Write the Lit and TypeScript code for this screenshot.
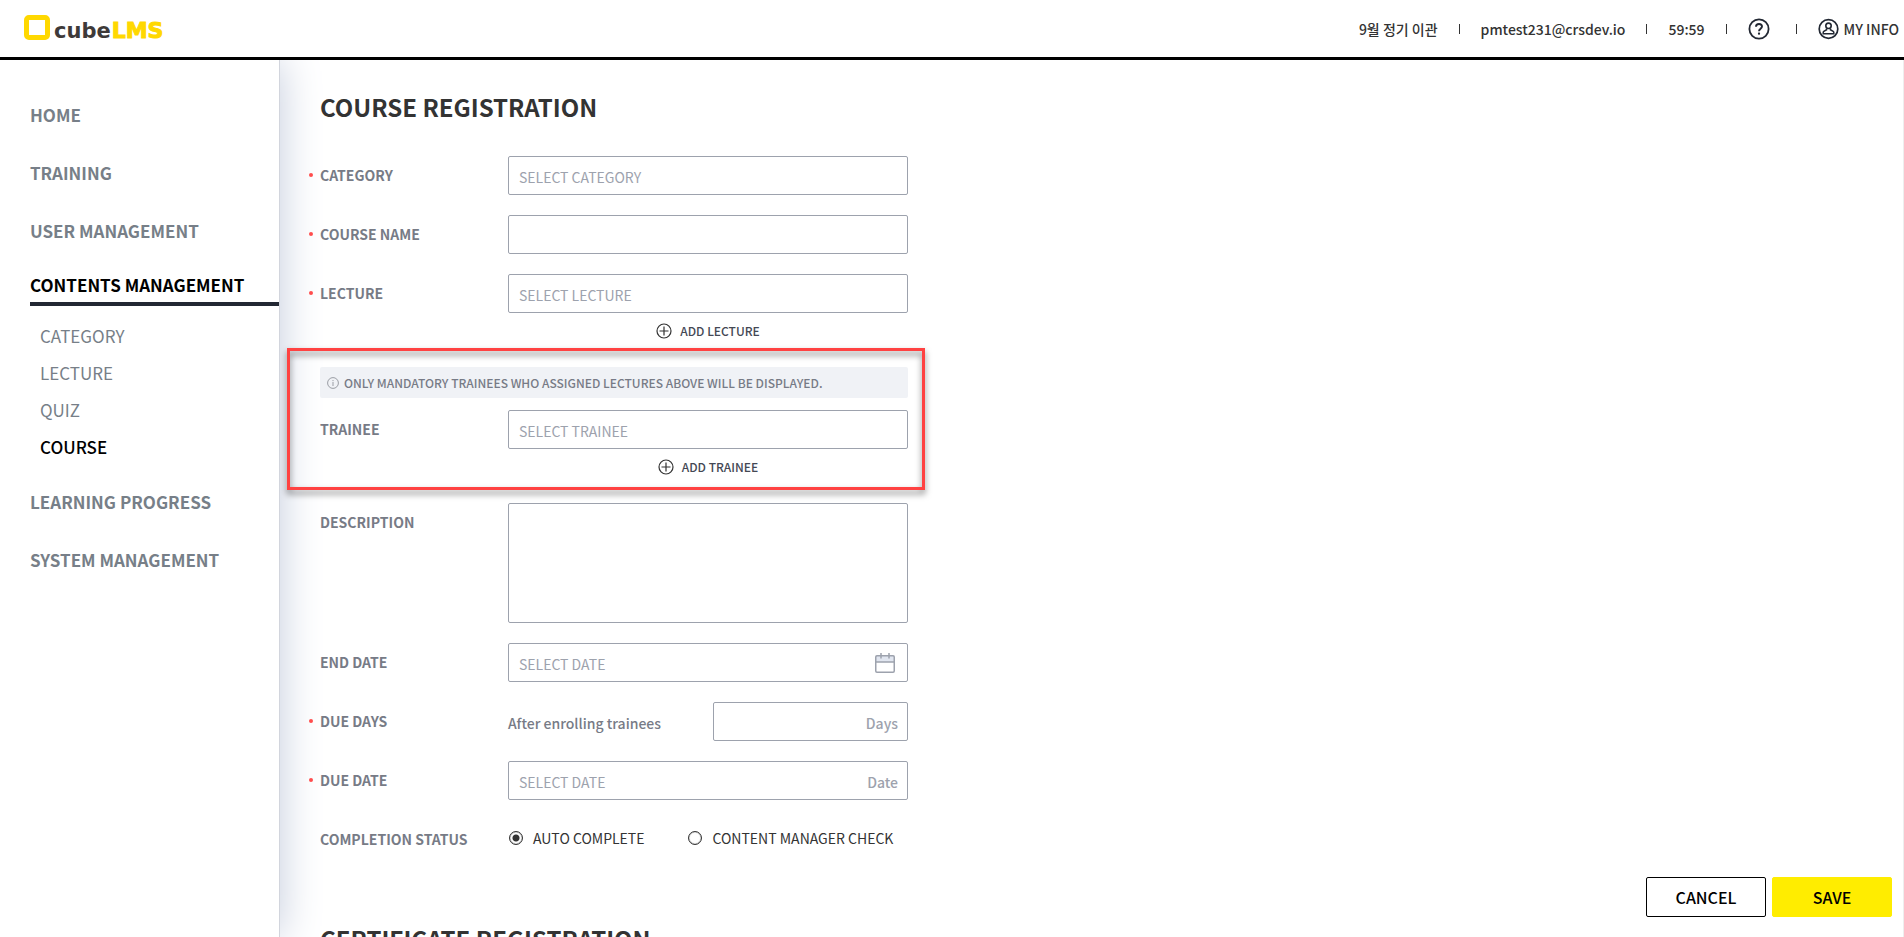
import { LitElement, html, css, nothing } from "lit";
import { customElement, state } from "lit/decorators.js";
import { classMap } from "lit/directives/class-map.js";

const plusIcon = html`<svg class="plus" viewBox="0 0 16 16" width="16" height="16" aria-hidden="true">
  <circle cx="8" cy="8" r="7" fill="none" stroke="#333" stroke-width="1.2" />
  <path d="M8 3.5v9M3.5 8h9" stroke="#333" stroke-width="1.2" fill="none" />
</svg>`;

const calendarIcon = html`<svg viewBox="0 0 20 20" width="20" height="20" aria-hidden="true">
  <path d="M1 3.5q0-1 1-1h16q1 0 1 1V9H1z" fill="#e1e6f0" />
  <rect x="0.75" y="2.75" width="18.5" height="16.5" rx="1.2" fill="none" stroke="#9da2ad" stroke-width="1.5" />
  <path d="M1 9h18M6 0v5.6M14 0v5.6" fill="none" stroke="#9da2ad" stroke-width="1.5" />
</svg>`;

const sharedType = css`
  * { box-sizing: border-box; }
  :host { font-family: "Noto Sans CJK KR", "Noto Sans", sans-serif; }
  button { font-family: inherit; cursor: pointer; }
  a { color: inherit; text-decoration: none; }
`;

@customElement("lms-header")
class LmsHeader extends LitElement {
  static styles = [sharedType, css`
    :host { display: block; flex: none; }
    header {
      display: flex; align-items: center; justify-content: space-between;
      height: 60px; padding: 0 5px 2px 24px;
      border-bottom: 3px solid #000; background: #fff;
    }
    .logo { display: flex; align-items: flex-end; gap: 4px; height: 25px; }
    .logo svg { display: block; }
    .word { display: flex; align-items: baseline; gap: 1px; font: 700 21px/18px "DejaVu Sans", sans-serif; color: #3e3a39; }
    .word b { font-size: 22px; color: #ffd800; -webkit-text-stroke: 1px #ffd800; }
    .tools { display: flex; align-items: center; font-size: 14px; line-height: 20px; font-weight: 500; color: #333; padding-top: 3px; }
    .tools > span, .tools > a, .tools > button { display: flex; align-items: center; gap: 5px; }
    .tools > button { border: 0; padding: 0; background: none; }
    .tools > * + * { margin-left: 21px; position: relative; }
    .tools > span + *, .tools > button + * { padding-left: 22px; }
    .tools > button + * { margin-left: 26px; }
    .tools > * + *::before {
      content: ""; position: absolute; left: 0; top: 50%;
      height: 10px; border-left: 1px solid #333; margin-top: -5px;
    }
  `];
  render() {
    return html`<header>
      <a class="logo" href="#" aria-label="cubeLMS">
        <svg width="26" height="25" viewBox="0 0 26 25" aria-hidden="true">
          <rect x="2.5" y="2.5" width="21" height="20" rx="2.4" fill="none" stroke="#ffd800" stroke-width="5" />
        </svg>
        <span class="word">cube<b>LMS</b></span>
      </a>
      <div class="tools">
        <span>9월 정기 이관</span>
        <span>pmtest231@crsdev.io</span>
        <span>59:59</span>
        <button aria-label="Help">
          <svg width="22" height="22" viewBox="0 0 22 22" fill="none" stroke="#222833" aria-hidden="true">
            <circle cx="11" cy="11" r="9.6" stroke-width="1.8" />
            <path d="M8 8.8C8 7 9.3 6 11 6s3 1 3 2.6c0 2-3 2.3-3 4.6" stroke-width="1.9" />
            <path d="M11 14.6v2" stroke-width="2.1" />
          </svg>
        </button>
        <a href="#">
          <svg width="21" height="22" viewBox="0 0 21 22" fill="none" stroke="#222833" aria-hidden="true">
            <circle cx="10.5" cy="11" r="9.3" stroke-width="1.7" />
            <circle cx="10.5" cy="7.8" r="2.7" stroke-width="1.6" />
            <path d="M8.6 10.5v1.2l-2.8 1.6q-.6.4-.6 1.2v1.3h10.6v-1.3q0-.8-.6-1.2l-2.8-1.6v-1.2" stroke-width="1.5" />
          </svg>
          MY INFO
        </a>
      </div>
    </header>`;
  }
}

type NavItem = { label: string; active?: boolean; children?: NavItem[] };

const NAV: NavItem[] = [
  { label: "HOME" },
  { label: "TRAINING" },
  { label: "USER MANAGEMENT" },
  {
    label: "CONTENTS MANAGEMENT", active: true,
    children: [{ label: "CATEGORY" }, { label: "LECTURE" }, { label: "QUIZ" }, { label: "COURSE", active: true }],
  },
  { label: "LEARNING PROGRESS" },
  { label: "SYSTEM MANAGEMENT" },
];

@customElement("lms-sidebar")
class LmsSidebar extends LitElement {
  static styles = [sharedType, css`
    :host { display: block; flex: none; width: 280px; border-right: 1px solid #d2d5dd; background: #fff; box-shadow: 0 0 40px #c3cbdc; }
    ul { list-style: none; margin: 0; padding: 0; }
    .menu { padding: 26px 0 0 30px; font-size: 17px; line-height: 58px; font-weight: 700; color: #777f88; }
    .menu a { display: block; white-space: nowrap; }
    .menu > li > .active { color: #000; border-bottom: 4px solid #222833; line-height: 50px; height: 46px; }
    .sub { padding: 11px 0 8px 10px; line-height: 37px; font-weight: 400; }
    .sub .active { color: #000; font-weight: 500; }
  `];
  link(item: NavItem) {
    return html`<a href="#" class=${classMap({ active: !!item.active })}>${item.label}</a>`;
  }
  render() {
    return html`<nav><ul class="menu">
      ${NAV.map((item) => html`<li>${this.link(item)}
        ${item.children ? html`<ul class="sub">${item.children.map((c) => html`<li>${this.link(c)}</li>`)}</ul>` : nothing}
      </li>`)}
    </ul></nav>`;
  }
}

@customElement("course-form")
class CourseForm extends LitElement {
  @state() completion = "auto";
  static styles = [sharedType, css`
    :host { display: block; }
    form { width: 588px; }
    h1, h2 { margin: 0; font-size: 24px; line-height: 36px; font-weight: 700; color: #333; }
    .fields { display: flex; flex-direction: column; gap: 20px; padding-top: 31px; }
    .row { display: grid; grid-template-columns: 188px 1fr; }
    .label { position: relative; font-size: 14px; line-height: 38px; font-weight: 700; color: #777b86; }
    .required::before {
      content: ""; position: absolute; left: -11px; top: 17px;
      width: 4px; height: 4px; border-radius: 2px; background: #ff4d4d;
    }
    .box { display: flex; align-items: center; height: 39px; border: 1px solid #9da2ad; border-radius: 2px; background: #fff; padding: 0 9px 0 0; }
    input[type="text"] {
      flex: 1; min-width: 0; height: 37px; border: 0; outline: 0; background: none; padding: 2px 0 0 10px;
      font-family: inherit; font-size: 14px; color: #333;
    }
    input::placeholder { color: #9da2ad; opacity: 1; }
    .unit { font-size: 14px; line-height: 22px; font-weight: 500; color: #9da2ad; padding-top: 2px; }
    .box svg { display: block; margin-right: 3px; }
    textarea { display: block; width: 100%; height: 120px; border: 1px solid #9da2ad; border-radius: 2px; resize: none; background: #fff; padding: 10px; font: inherit; }
    .split { display: grid; grid-template-columns: 1fr 195px; align-items: center; font-size: 14px; font-weight: 500; color: #777b86; }
    .split > span { padding-top: 2px; }
    .add {
      display: flex; align-items: center; justify-content: center; gap: 8px;
      width: 100%; height: 16px; margin-top: 10px; border: 0; padding: 0; background: none;
      font-size: 12px; line-height: 16px; font-weight: 500; color: #444854;
    }
    .group { position: relative; display: flex; flex-direction: column; gap: 12px; padding: 8px 0 8px; }
    .group::before {
      content: ""; position: absolute; inset: -11px -17px -7px -33px; pointer-events: none;
      border: 3px solid #ff4242; filter: drop-shadow(0 4px 3px rgb(0 0 0 / 50%));
    }
    .notice {
      display: flex; align-items: center; gap: 5px; height: 31px; margin: 0; padding: 0 7px;
      border-radius: 2px; background: #f0f2f6; font-size: 12px; font-weight: 500; color: #777b86;
    }
    .radios { display: flex; gap: 43px; border: 0; margin: 0; padding: 0; }
    .radios label { display: flex; align-items: center; gap: 10px; height: 35px; font-size: 14px; line-height: 22px; color: #333; white-space: nowrap; }
    input[type="radio"] {
      appearance: none; width: 14px; height: 14px; margin: 0 0 0 1px; border: 1px solid #333; border-radius: 50%;
      background: #fff; box-shadow: inset 0 0 1px #333;
    }
    input[type="radio"]:checked { background: radial-gradient(circle, #333 3px, #fff 4px); }
    .next { padding-top: 63px; }
  `];

  field(id: string, label: string, placeholder: string, required: boolean, extra: unknown = nothing, below: unknown = nothing) {
    return html`<div class="row">
      <label class=${classMap({ label: true, required })} for=${id}>${label}</label>
      <div><div class="box"><input id=${id} type="text" placeholder=${placeholder} />${extra}</div>${below}</div>
    </div>`;
  }
  radio(value: string, text: string) {
    return html`<label><input type="radio" name="completion" .checked=${this.completion === value}
      @change=${() => (this.completion = value)} />${text}</label>`;
  }
  render() {
    return html`<form @submit=${(e: Event) => e.preventDefault()}>
      <h1>COURSE REGISTRATION</h1>
      <div class="fields">
        ${this.field("category", "CATEGORY", "SELECT CATEGORY", true)}
        ${this.field("name", "COURSE NAME", "", true)}
        ${this.field("lecture", "LECTURE", "SELECT LECTURE", true, nothing,
          html`<button type="button" class="add">${plusIcon}ADD LECTURE</button>`)}
        <div class="group">
          <p class="notice">
            <svg width="12" height="12" viewBox="0 0 12 12" fill="none" stroke="#9a9da4" aria-hidden="true">
              <circle cx="6" cy="6" r="5.4" /><path d="M6 5v4M6 3v1.1" />
            </svg>
            ONLY MANDATORY TRAINEES WHO ASSIGNED LECTURES ABOVE WILL BE DISPLAYED.
          </p>
          ${this.field("trainee", "TRAINEE", "SELECT TRAINEE", false, nothing,
            html`<button type="button" class="add">${plusIcon}ADD TRAINEE</button>`)}
        </div>
        <div class="row">
          <label class="label" for="description">DESCRIPTION</label>
          <textarea id="description"></textarea>
        </div>
        ${this.field("end", "END DATE", "SELECT DATE", false, calendarIcon)}
        <div class="row">
          <label class="label required" for="days">DUE DAYS</label>
          <div class="split">
            <span>After enrolling trainees</span>
            <div class="box"><input id="days" type="text" /><span class="unit">Days</span></div>
          </div>
        </div>
        ${this.field("due", "DUE DATE", "SELECT DATE", true, html`<span class="unit">Date</span>`)}
        <div class="row">
          <span class="label" id="status">COMPLETION STATUS</span>
          <fieldset class="radios" aria-labelledby="status">
            ${this.radio("auto", "AUTO COMPLETE")}${this.radio("manager", "CONTENT MANAGER CHECK")}
          </fieldset>
        </div>
      </div>
      <h2 class="next">CERTIFICATE REGISTRATION</h2>
    </form>`;
  }
}

@customElement("app-root")
class AppRoot extends LitElement {
  static styles = [sharedType, css`
    :host { display: flex; flex-direction: column; height: 100vh; overflow: hidden; background: #fff; }
    .body { display: flex; flex: 1; min-height: 0; overflow: hidden; }
    main {
      position: relative; flex: 1; min-width: 0; overflow: hidden; padding: 29px 40px 0;
      border-right: 1px solid #eee;
    }
    .actions { position: absolute; right: 11px; bottom: 20px; display: flex; gap: 6px; }
    .actions button { width: 120px; height: 40px; padding: 0; border-radius: 2px; font-size: 16px; line-height: 38px; font-weight: 500; color: #000; border: 1px solid #000; background: #fff; }
    .actions .save { border-color: #ffed00; background: #ffed00; }
  `];
  render() {
    return html`<lms-header></lms-header>
      <div class="body">
        <lms-sidebar></lms-sidebar>
        <main>
          <course-form></course-form>
          <div class="actions"><button>CANCEL</button><button class="save">SAVE</button></div>
        </main>
      </div>`;
  }
}
